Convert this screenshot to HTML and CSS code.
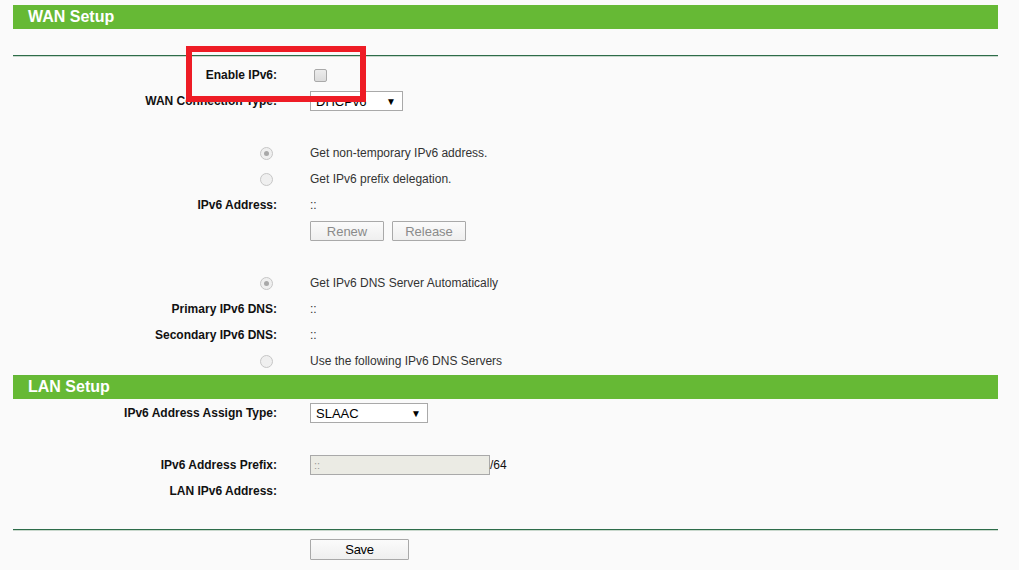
FILE: index.html
```html
<!DOCTYPE html>
<html>
<head>
<meta charset="utf-8">
<link rel="stylesheet" href="styles.css">
</head>
<body>
<div class="page">
  <div class="bar bar-wan">WAN Setup</div>
  <div class="rule rule-top"></div>
  <div class="form form-wan">
    <div class="label">Enable IPv6:</div>
    <div class="value"><span class="checkbox"></span></div>

    <div class="label">WAN Connection Type:</div>
    <div class="value"><span class="select select-wan"><span>DHCPv6</span><span class="arrow">▼</span></span></div>

    <div class="label"></div><div class="value"></div>

    <div class="label"><span class="radio checked"></span></div>
    <div class="value">Get non-temporary IPv6 address.</div>

    <div class="label"><span class="radio"></span></div>
    <div class="value">Get IPv6 prefix delegation.</div>

    <div class="label">IPv6 Address:</div>
    <div class="value">::</div>

    <div class="label"></div>
    <div class="value buttons"><span class="btn btn-dis">Renew</span><span class="btn btn-dis">Release</span></div>

    <div class="label"></div><div class="value"></div>

    <div class="label"><span class="radio checked"></span></div>
    <div class="value">Get IPv6 DNS Server Automatically</div>

    <div class="label">Primary IPv6 DNS:</div>
    <div class="value">::</div>

    <div class="label">Secondary IPv6 DNS:</div>
    <div class="value">::</div>

    <div class="label"><span class="radio"></span></div>
    <div class="value">Use the following IPv6 DNS Servers</div>
  </div>

  <div class="bar bar-lan">LAN Setup</div>
  <div class="form form-lan">
    <div class="label">IPv6 Address Assign Type:</div>
    <div class="value"><span class="select select-lan"><span>SLAAC</span><span class="arrow">▼</span></span></div>

    <div class="label"></div><div class="value"></div>

    <div class="label">IPv6 Address Prefix:</div>
    <div class="value"><span class="input">::</span><span class="suffix">/64</span></div>

    <div class="label">LAN IPv6 Address:</div>
    <div class="value"></div>
  </div>
  <div class="rule rule-bottom"></div>
  <div class="save-row"><span class="btn btn-save">Save</span></div>

  <div class="highlight"></div>
</div>
</body>
</html>
```

FILE: styles.css
```css
html, body {
  margin: 0;
  padding: 0;
  background: #fafafa;
}
body {
  font-family: "Liberation Sans", Arial, sans-serif;
  font-size: 12px;
  color: #000;
}
.page {
  position: relative;
  width: 985px;
  margin-left: 13px;
  padding-top: 5px;
}
.bar {
  height: 24px;
  line-height: 24px;
  background: #66b935;
  color: #fff;
  font-weight: bold;
  font-size: 16px;
  padding-left: 15px;
}
.rule {
  height: 1px;
  background: #2d6c49;
  border-bottom: 1px solid #c9d8cd;
}
.rule-top {
  margin-top: 26px;
  margin-bottom: 5px;
}
.form {
  display: grid;
  grid-template-columns: 264px 1fr;
  column-gap: 33px;
  grid-auto-rows: 26px;
  align-items: center;
}
.form-lan {
  margin-top: 1px;
}
.bar-lan {
  margin-top: 1px;
}
.label {
  text-align: right;
  font-weight: bold;
  color: #111;
  display: flex;
  justify-content: flex-end;
  align-items: center;
  height: 26px;
}
.value {
  color: #333;
  display: flex;
  align-items: center;
  height: 26px;
}
.checkbox {
  display: inline-block;
  width: 11px;
  height: 11px;
  margin-left: 4px;
  border: 1px solid #a9a9a9;
  border-radius: 2px;
  background: linear-gradient(#ececec, #dcdcdc);
}
.radio {
  display: inline-block;
  width: 11px;
  height: 11px;
  margin-right: 4px;
  border: 1px solid #c6c6c6;
  border-radius: 50%;
  background: #efefef;
  position: relative;
}
.radio.checked::after {
  content: "";
  position: absolute;
  left: 3px;
  top: 3px;
  width: 5px;
  height: 5px;
  border-radius: 50%;
  background: #a8a8a8;
}
.select {
  display: inline-flex;
  align-items: center;
  justify-content: space-between;
  box-sizing: border-box;
  height: 20px;
  border: 1px solid #a9a9a9;
  background: #fff;
  color: #000;
  font-size: 13px;
  padding: 0 6px 0 5px;
}
.select-wan { width: 93px; }
.select-lan { width: 118px; }
.arrow {
  font-size: 10px;
}
.buttons {
  gap: 8px;
}
.btn {
  display: inline-flex;
  align-items: center;
  justify-content: center;
  box-sizing: border-box;
  height: 20px;
  width: 74px;
  border: 1px solid #a9a9a9;
  background: linear-gradient(#fbfbfb, #efefef);
  font-size: 13px;
  border-radius: 1px;
}
.btn-dis {
  color: #8a8a8a;
}
.input {
  display: inline-flex;
  align-items: center;
  box-sizing: border-box;
  width: 180px;
  height: 20px;
  border: 1px solid #a9a9a9;
  background: #ebebe4;
  color: #999;
  padding-left: 3px;
  font-size: 11px;
}
.suffix {
  color: #111;
}
.rule-bottom {
  margin-top: 25px;
}
.save-row {
  padding-left: 297px;
  padding-top: 8px;
}
.btn-save {
  width: 99px;
  height: 21px;
  color: #000;
  letter-spacing: -0.3px;
}
.highlight {
  position: absolute;
  left: 173px;
  top: 46px;
  width: 168px;
  height: 44px;
  border: 6px solid #ee1c25;
}
```
